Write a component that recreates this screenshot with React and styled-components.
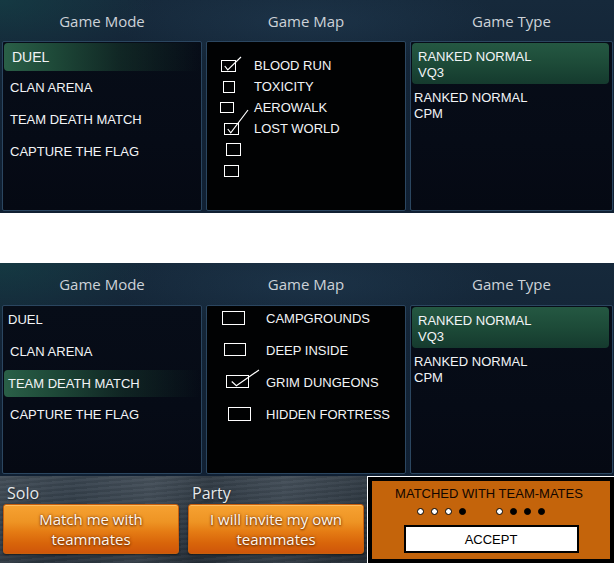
import React from "react";
import styled, { createGlobalStyle } from "styled-components";

const GlobalStyle = createGlobalStyle`
  html, body { margin: 0; padding: 0; background: #ffffff; }
  body {
    width: 614px; height: 568px; overflow: hidden;
    font-family: "Liberation Sans", Arial, sans-serif;
  }
`;

const Page = styled.div`
  width: 614px;
  display: flex;
  flex-direction: column;
`;

const Panel = styled.section`
  height: ${(p) => p.$h}px;
  box-sizing: border-box;
  padding: 0 1px 2px 2px;
  display: grid;
  grid-template-columns: 200px 200px 203px;
  grid-template-rows: ${(p) => p.$head}px 1fr;
  column-gap: 4px;
  background:
    radial-gradient(ellipse 220px 90px at 0% 0%, rgba(20, 70, 72, 0.55), transparent 70%),
    radial-gradient(ellipse 260px 60px at 50% 10%, rgba(40, 70, 95, 0.35), transparent 75%),
    linear-gradient(180deg, #16293b 0%, #132436 40%, #102033 100%);
`;

const Heading = styled.h2`
  margin: 0;
  display: flex;
  align-items: center;
  justify-content: center;
  font-family: "Open Sans", "Liberation Sans", sans-serif;
  font-weight: 400;
  font-size: 15px;
  color: #cdd2d8;
`;

const Box = styled.div`
  box-sizing: border-box;
  border: 1px solid #2b4660;
  border-radius: 2px;
  background: ${(p) =>
    p.$black
      ? "#010203"
      : "linear-gradient(180deg, #070d18 0%, #060b16 60%, #050913 100%)"};
  overflow: visible;
  display: flex;
  flex-direction: column;
  padding-top: ${(p) => p.$pt || 0}px;
`;

const ModeRow = styled.div`
  height: ${(p) => p.$h}px;
  flex: none;
  display: flex;
  align-items: center;
  box-sizing: border-box;
  margin: ${(p) => p.$mt || 0}px 1px 0 1px;
  padding-left: ${(p) => p.$pl}px;
  font-size: ${(p) => p.$fs || 13}px;
  color: #f2f4f6;
  border-radius: 4px;
  background: ${(p) =>
    p.$active
      ? "linear-gradient(90deg, rgba(44,100,74,0.95) 0%, rgba(34,84,62,0.85) 25%, rgba(24,58,46,0.55) 60%, rgba(10,20,24,0) 100%)"
      : "transparent"};
`;

const MapRow = styled.div`
  height: ${(p) => p.$h}px;
  flex: none;
  display: flex;
  align-items: ${(p) => (p.$top ? "flex-start" : "center")};
  padding-top: ${(p) => (p.$top ? 5 : 0)}px;
  box-sizing: border-box;
  font-size: 13px;
  color: #f2f4f6;
`;

const CheckCell = styled.div`
  width: ${(p) => p.$w}px;
  flex: none;
  display: flex;
  align-items: center;
`;

const CheckSvg = styled.svg`
  display: block;
  overflow: visible;
  margin-left: ${(p) => p.$ml}px;
`;

const MapLabel = styled.span`
  line-height: 15px;
`;

const TypeItem = styled.div`
  box-sizing: border-box;
  height: ${(p) => p.$h}px;
  flex: none;
  margin: ${(p) => (p.$active ? "0 3px 0 1px" : "0")};
  padding: ${(p) => (p.$active ? "6px 0 0 6px" : "6px 0 0 3px")};
  border-radius: 4px;
  font-size: 13px;
  line-height: 16px;
  color: #f2f4f6;
  background: ${(p) =>
    p.$active
      ? "linear-gradient(180deg, rgba(38,92,68,0.95) 0%, rgba(30,78,58,0.95) 50%, rgba(22,62,48,0.92) 100%)"
      : "transparent"};
`;

const Spacer = styled.div`
  height: 50px;
  background: #ffffff;
`;

const BottomRow = styled.div`
  display: flex;
  height: 92px;
  background: #ffffff;
`;

const PlayBar = styled.div`
  width: 367px;
  height: 87px;
  box-sizing: border-box;
  padding: 5px 3px 0 3px;
  display: grid;
  grid-template-columns: 176px 176px;
  column-gap: 9px;
  background:
    linear-gradient(100deg, rgba(255,255,255,0.05) 0%, rgba(255,255,255,0) 20%, rgba(255,255,255,0.06) 40%, rgba(0,0,0,0.1) 55%, rgba(255,255,255,0.05) 75%, rgba(0,0,0,0.15) 100%),
    repeating-linear-gradient(175deg, rgba(255,255,255,0.03) 0px, rgba(255,255,255,0.03) 2px, rgba(0,0,0,0.05) 3px, rgba(0,0,0,0.05) 5px),
    linear-gradient(180deg, #3a4550 0%, #2f3a45 50%, #27313b 100%);
`;

const PlayCol = styled.div`
  display: flex;
  flex-direction: column;
`;

const PlayLabel = styled.div`
  height: 23px;
  display: flex;
  align-items: center;
  padding-left: 4px;
  font-family: "Open Sans", "Liberation Sans", sans-serif;
  font-size: 16px;
  color: #e6e9ec;
  text-shadow: 0 1px 2px rgba(0,0,0,0.6);
`;

const OrangeButton = styled.button`
  height: 50px;
  width: 100%;
  box-sizing: border-box;
  border: 1px solid #c85f0c;
  border-radius: 3px;
  padding: 0 6px;
  font-family: "Open Sans", "Liberation Sans", sans-serif;
  font-size: 15px;
  line-height: 20px;
  color: #fff7ee;
  text-shadow: 0 0 3px #7a3400, 0 1px 2px #7a3400;
  background: linear-gradient(180deg, #f6a232 0%, #ee9424 35%, #e57c14 55%, #d8640a 80%, #cf560a 100%);
  box-shadow: inset 0 1px 0 rgba(255,220,150,0.5), 0 1px 2px rgba(0,0,0,0.5);
  cursor: pointer;
`;

const MatchFrame = styled.div`
  margin: 1px 0 0 1px;
  width: 246px;
  height: 86px;
  box-sizing: border-box;
  border: 4px solid #000;
  background: #c4640b;
  display: flex;
  flex-direction: column;
  align-items: center;
  padding-top: 5px;
`;

const MatchTitle = styled.div`
  font-size: 13px;
  line-height: 15px;
  color: #120600;
  margin-left: -4px;
`;

const DotsRow = styled.div`
  display: flex;
  gap: 30px;
  margin-top: 7px;
  margin-right: 20px;
`;

const DotGroup = styled.div`
  display: flex;
  gap: 7px;
`;

const Dot = styled.span`
  width: 7px;
  height: 7px;
  box-sizing: border-box;
  border-radius: 50%;
  border: 1px solid #000;
  background: ${(p) => (p.$filled ? "#000" : "#fff")};
`;

const AcceptButton = styled.button`
  margin-top: 10px;
  width: 175px;
  height: 28px;
  box-sizing: border-box;
  border: 2px solid #000;
  background: #fff;
  font-family: "Liberation Sans", Arial, sans-serif;
  font-size: 13px;
  color: #000;
  padding: 0;
  margin-left: 0;
`;

function Check({ w, h, ml, checked, tail }) {
  return (
    <CheckSvg $ml={ml} width={w} height={h} viewBox={`0 0 ${w} ${h}`}>
      <rect x="0.5" y="0.5" width={w - 1} height={h - 1} fill="none" stroke="#fff" strokeWidth="1" />
      {checked && (
        <polyline
          points={`${w * 0.25},${h * 0.5} ${w * 0.45},${h * 0.82} ${w + tail[0]},${-tail[1]}`}
          fill="none"
          stroke="#fff"
          strokeWidth="1.2"
        />
      )}
    </CheckSvg>
  );
}

const modesTop = [
  { t: "DUEL", active: true, pl: 8, h: 28, mt: 1, fs: 14 },
  { t: "CLAN ARENA", pl: 6, h: 32 },
  { t: "TEAM DEATH MATCH", pl: 6, h: 32 },
  { t: "CAPTURE THE FLAG", pl: 6, h: 32 },
];

const modesBottom = [
  { t: "DUEL", pl: 4, h: 26 },
  { t: "CLAN ARENA", pl: 6, h: 38 },
  { t: "TEAM DEATH MATCH", pl: 4, h: 27, active: true },
  { t: "CAPTURE THE FLAG", pl: 6, h: 34 },
];

const mapsTop = [
  { t: "BLOOD RUN", w: 15, h: 12, ml: 14, checked: true, tail: [5, 3] },
  { t: "TOXICITY", w: 12, h: 12, ml: 16 },
  { t: "AEROWALK", w: 14, h: 11, ml: 13 },
  { t: "LOST WORLD", w: 15, h: 12, ml: 17, checked: true, tail: [9, 13] },
  { t: "", w: 15, h: 13, ml: 19 },
  { t: "", w: 15, h: 12, ml: 17 },
];

const mapsBottom = [
  { t: "CAMPGROUNDS", w: 23, h: 14, ml: 15 },
  { t: "DEEP INSIDE", w: 22, h: 13, ml: 17 },
  { t: "GRIM DUNGEONS", w: 23, h: 13, ml: 19, checked: true, tail: [10, 5] },
  { t: "HIDDEN FORTRESS", w: 23, h: 14, ml: 21 },
];

function Section({ h, head, modes, maps, mapRowH, mapPt, mapCell, mapTop, typeH }) {
  return (
    <Panel $h={h} $head={head}>
      <Heading>Game Mode</Heading>
      <Heading>Game Map</Heading>
      <Heading>Game Type</Heading>
      <Box>
        {modes.map((m) => (
          <ModeRow key={m.t} $active={m.active} $pl={m.pl} $h={m.h} $mt={m.mt} $fs={m.fs}>
            {m.t}
          </ModeRow>
        ))}
      </Box>
      <Box $black $pt={mapPt}>
        {maps.map((m, i) => (
          <MapRow key={i} $h={mapRowH} $top={mapTop}>
            <CheckCell $w={mapCell}>
              <Check w={m.w} h={m.h} ml={m.ml} checked={m.checked} tail={m.tail} />
            </CheckCell>
            <MapLabel>{m.t}</MapLabel>
          </MapRow>
        ))}
      </Box>
      <Box $pt={1}>
        <TypeItem $active $h={typeH}>
          RANKED NORMAL
          <br />
          VQ3
        </TypeItem>
        <TypeItem $h={42}>
          RANKED NORMAL
          <br />
          CPM
        </TypeItem>
      </Box>
    </Panel>
  );
}

export default function App() {
  return (
    <Page>
      <GlobalStyle />
      <Section
        h={213}
        head={41}
        modes={modesTop}
        maps={mapsTop}
        mapRowH={21}
        mapPt={13}
        mapCell={47}
        typeH={41}
      />
      <Spacer />
      <Section
        h={213}
        head={42}
        modes={modesBottom}
        maps={mapsBottom}
        mapRowH={32}
        mapPt={0}
        mapCell={59}
        mapTop
        typeH={41}
      />
      <BottomRow>
        <PlayBar>
          <PlayCol>
            <PlayLabel>Solo</PlayLabel>
            <OrangeButton>
              Match me with
              <br />
              teammates
            </OrangeButton>
          </PlayCol>
          <PlayCol>
            <PlayLabel>Party</PlayLabel>
            <OrangeButton>
              I will invite my own
              <br />
              teammates
            </OrangeButton>
          </PlayCol>
        </PlayBar>
        <MatchFrame>
          <MatchTitle>MATCHED WITH TEAM-MATES</MatchTitle>
          <DotsRow>
            <DotGroup>
              <Dot />
              <Dot />
              <Dot />
              <Dot $filled />
            </DotGroup>
            <DotGroup>
              <Dot />
              <Dot $filled />
              <Dot $filled />
              <Dot $filled />
            </DotGroup>
          </DotsRow>
          <AcceptButton>ACCEPT</AcceptButton>
        </MatchFrame>
      </BottomRow>
    </Page>
  );
}
